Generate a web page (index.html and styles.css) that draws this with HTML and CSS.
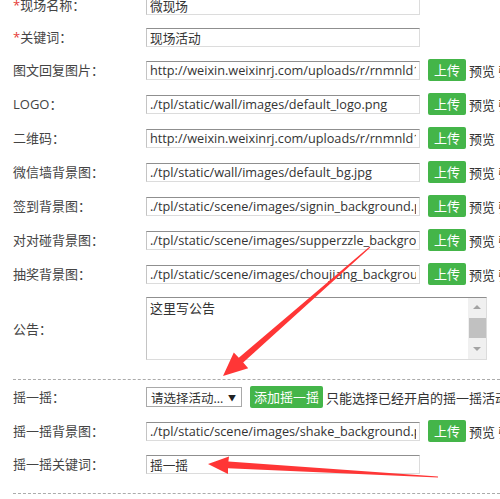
FILE: index.html
```html
<!DOCTYPE html>
<html lang="zh-CN">
<head>
    <meta charset="UTF-8">
    <title>现场设置</title>
    <link rel="stylesheet" href="styles.css">
</head>
<body>
    <div class="page">
        <div class="form">
            <div class="row">
                <label class="label"><em class="req">*</em>现场名称：</label>
                <input class="text" type="text" value="微现场">
            </div>
            <div class="row">
                <label class="label"><em class="req">*</em>关键词：</label>
                <input class="text" type="text" value="现场活动">
            </div>
            <div class="row">
                <label class="label">图文回复图片：</label>
                <input class="text" type="text" value="http://weixin.weixinrj.com/uploads/r/rnmnld14c2/a/b.jpg">
                <button class="btn">上传</button><span class="hint">预览 强制</span>
            </div>
            <div class="row">
                <label class="label">LOGO：</label>
                <input class="text" type="text" value="./tpl/static/wall/images/default_logo.png">
                <button class="btn">上传</button><span class="hint">预览 强制</span>
            </div>
            <div class="row">
                <label class="label">二维码：</label>
                <input class="text" type="text" value="http://weixin.weixinrj.com/uploads/r/rnmnld14c2/q/r.jpg">
                <button class="btn">上传</button><span class="hint">预览</span>
            </div>
            <div class="row">
                <label class="label">微信墙背景图：</label>
                <input class="text" type="text" value="./tpl/static/wall/images/default_bg.jpg">
                <button class="btn">上传</button><span class="hint">预览 强制</span>
            </div>
            <div class="row">
                <label class="label">签到背景图：</label>
                <input class="text" type="text" value="./tpl/static/scene/images/signin_background.png">
                <button class="btn">上传</button><span class="hint">预览 强制</span>
            </div>
            <div class="row">
                <label class="label">对对碰背景图：</label>
                <input class="text" type="text" value="./tpl/static/scene/images/supperzzle_background.png">
                <button class="btn">上传</button><span class="hint">预览 强制</span>
            </div>
            <div class="row">
                <label class="label">抽奖背景图：</label>
                <input class="text" type="text" value="./tpl/static/scene/images/choujiang_background.png">
                <button class="btn">上传</button><span class="hint">预览 强制</span>
            </div>
            <div class="row">
                <label class="label">公告：</label>
                <div class="memo">
                    <textarea class="memo-text">这里写公告</textarea>
                    <div class="scroll">
                        <span class="scroll-up"></span>
                        <span class="scroll-thumb"></span>
                        <span class="scroll-down"></span>
                    </div>
                </div>
            </div>

            <div class="sep"></div>

            <div class="row">
                <label class="label">摇一摇：</label>
                <div class="pick"><span>请选择活动...</span><span class="caret">▼</span></div>
                <button class="btn btn-add">添加摇一摇</button><span class="hint">只能选择已经开启的摇一摇活动</span>
            </div>
            <div class="row">
                <label class="label">摇一摇背景图：</label>
                <input class="text" type="text" value="./tpl/static/scene/images/shake_background.png">
                <button class="btn">上传</button><span class="hint">预览 强制</span>
            </div>
            <div class="row">
                <label class="label">摇一摇关键词：</label>
                <input class="text" type="text" value="摇一摇">
            </div>

            <div class="sep"></div>

            <div class="row">
                <label class="label">数钱：</label>
                <div class="pick"><span>请选择活动...</span><span class="caret">▼</span></div>
            </div>
        </div>

        <!-- annotation arrows -->
        <svg class="marks" width="500" height="499" viewBox="0 0 500 499">
            <polygon fill="#ff3636" points="370.3,247.4 243.2,362.6 248.2,368.2 223,376 233.8,352.4 238.8,357.8 369.7,246.6"/>
            <polygon fill="#ff3636" points="438,477.5 228,468.3 228,474 208,464 229,456.5 228.4,461.6 438,476.5"/>
        </svg>
    </div>
</body>
</html>
```

FILE: styles.css
```css
body {
    margin: 0;
    font-family: "Open Sans", "Noto Sans CJK SC", sans-serif;
    font-size: 13px;
    color: #333;
    background: #fff;
    overflow: hidden;
}
.page {
    position: relative;
    width: 500px;
    height: 499px;
    overflow: hidden;
}
.form {
    margin-top: -11px;
    padding-left: 13px;
}
.row {
    display: flex;
    align-items: center;
    padding: 6px 0;
    white-space: nowrap;
}
.label {
    width: 133px;
    flex: none;
    color: #444;
    line-height: 20px;
}
.req {
    color: #e53935;
    font-style: normal;
}
.text {
    box-sizing: border-box;
    flex: none;
    width: 274px;
    height: 19px;
    margin: 0;
    padding: 0 3px;
    border: 1px solid #dcdcdc;
    border-top-color: #8f8f8f;
    border-left-color: #c4c4c4;
    font: inherit;
    font-size: 12.7px;
    color: #333;
    outline: none;
}
.btn {
    flex: none;
    height: 22px;
    margin: 0 0 0 8px;
    padding: 0 6px;
    background: #44b549;
    color: #fff;
    border: 0;
    border-radius: 2px;
    font: inherit;
    line-height: 22px;
}
.btn-add {
    padding: 0 4px;
}
.hint {
    margin-left: 3px;
    color: #333;
}
.memo {
    box-sizing: border-box;
    display: flex;
    flex: none;
    width: 341px;
    height: 63px;
    border: 1px solid #dcdcdc;
    border-top-color: #8f8f8f;
    border-left-color: #c4c4c4;
}
.memo-text {
    flex: 1;
    margin: 0;
    padding: 1px 3px;
    border: 0;
    resize: none;
    overflow: hidden;
    font: inherit;
    line-height: 18px;
    color: #333;
    outline: none;
}
.scroll {
    display: flex;
    flex-direction: column;
    align-items: center;
    width: 18px;
    background: #f0f0f0;
}
.scroll-up,
.scroll-down {
    width: 0;
    height: 0;
    border-left: 4px solid transparent;
    border-right: 4px solid transparent;
}
.scroll-up {
    margin-top: 7px;
    border-bottom: 4px solid #a3a3a3;
}
.scroll-thumb {
    width: 17px;
    height: 20px;
    margin-top: 9px;
    background: #c1c1c1;
}
.scroll-down {
    margin-top: 9px;
    border-top: 4px solid #a3a3a3;
}
.sep {
    margin-top: 13px;
    border-top: 1px dashed #ababab;
}
.pick {
    box-sizing: border-box;
    display: flex;
    flex: none;
    justify-content: space-between;
    align-items: center;
    width: 96px;
    height: 20px;
    padding: 0 5px 0 4px;
    border: 1px solid #a9a9a9;
    color: #333;
    font-size: 12.5px;
}
.caret {
    font-size: 8px;
    color: #222;
}
.marks {
    position: absolute;
    top: 0;
    left: 0;
    pointer-events: none;
}
```
